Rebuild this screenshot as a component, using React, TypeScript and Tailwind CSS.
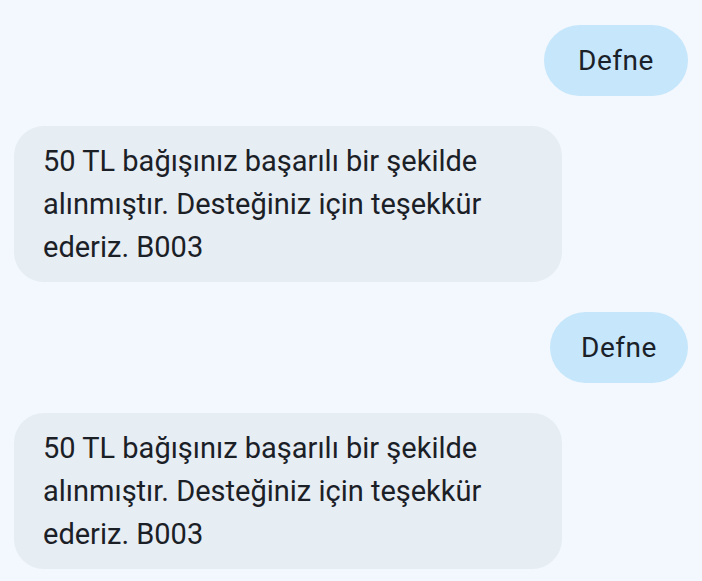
import React from "react";

const font = { fontFamily: "Roboto, 'Noto Sans', sans-serif" };

function Outgoing({ text, w }: { text: string; w: string }) {
  return (
    <div className="flex justify-end pr-[14px]">
      <div
        className={`h-[71px] ${w} rounded-full bg-[#c5e6fb] flex items-center justify-center text-[28px] tracking-[0.02em] text-[#1a2129]`}
      >
        {text}
      </div>
    </div>
  );
}

function Incoming() {
  return (
    <div className="pl-[14px]">
      <div className="w-[548px] h-[156px] rounded-[30px] bg-[#e6edf3] pl-[29px] pt-[14px] text-[29px] leading-[43px] text-[#1b2026]">
        50 TL bağışınız başarılı bir şekilde
        <br />
        alınmıştır. Desteğiniz için teşekkür
        <br />
        ederiz. B003
      </div>
    </div>
  );
}

export default function App() {
  return (
    <div
      className="w-[702px] h-[581px] bg-[#f2f8fd] flex flex-col pt-[25px] gap-[30px] overflow-hidden"
      style={font}
    >
      <Outgoing text="Defne" w="w-[144px]" />
      <Incoming />
      <Outgoing text="Defne" w="w-[138px]" />
      <Incoming />
    </div>
  );
}
